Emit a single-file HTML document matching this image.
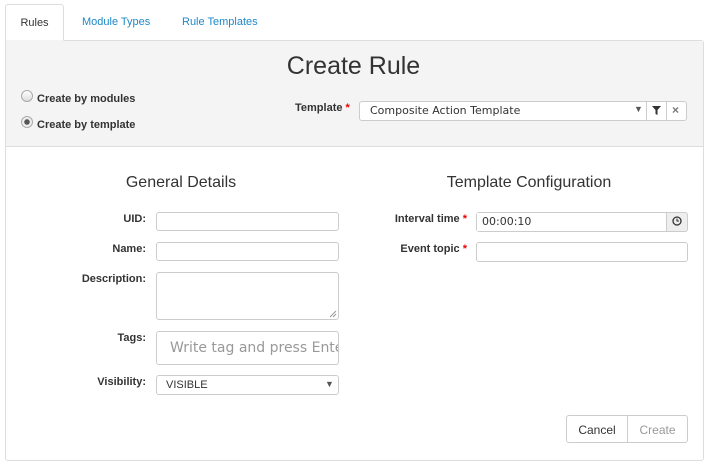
<!DOCTYPE html>
<html><head><meta charset="utf-8"><style>
*{box-sizing:border-box}
body{margin:0;width:707px;height:463px;background:#fff;font-family:"Liberation Sans",Arial,sans-serif;font-size:12px;color:#333;position:relative;overflow:hidden}
.a{position:absolute}
.tab{top:4px;height:37px;line-height:36px;font-size:11px}
.lbl{font-weight:bold;font-size:11px;text-align:right;color:#333}
.inp{border:1px solid #ccc;border-radius:3px;background:#fff}
.req{color:#e00}
</style></head><body>
<div class="a" style="left:5px;top:40px;width:699px;height:421px;border:1px solid #ddd;border-radius:0 3px 3px 3px"></div>
<div class="a tab" style="left:5px;width:59px;border:1px solid #ddd;border-bottom:1px solid #f4f4f4;border-radius:3px 3px 0 0;background:#fff;text-align:center;color:#333;z-index:2">Rules</div>
<div class="a tab" style="left:82px;color:#1e88c8">Module Types</div>
<div class="a tab" style="left:182px;color:#1e88c8">Rule Templates</div>
<div class="a" style="left:6px;top:41px;width:697px;height:106px;background:#f4f4f4;border-bottom:1px solid #ddd"></div>
<div class="a" style="left:0;width:707px;top:52px;text-align:center;font-size:25px;color:#333">Create Rule</div>
<div class="a" style="left:21px;top:90px;width:12px;height:12px;border-radius:50%;border:1px solid #aaa;background:linear-gradient(#fff,#ddd)"></div>
<div class="a" style="left:37px;top:93px;font-size:11px;font-weight:bold">Create by modules</div>
<div class="a" style="left:21px;top:116px;width:12px;height:12px;border-radius:50%;border:1px solid #aaa;background:radial-gradient(#555 0 2.5px,#eee 3px)"></div>
<div class="a" style="left:37px;top:119px;font-size:11px;font-weight:bold">Create by template</div>
<div class="a lbl" style="left:295px;top:102px">Template <span class="req">*</span></div>
<div class="a inp" style="left:359px;top:101px;width:328px;height:20px"></div>
<div class="a" style="left:370px;top:104px;font-family:'DejaVu Sans',sans-serif;font-size:11px">Composite Action Template</div>
<div class="a" style="left:634px;top:104px;font-size:9px;color:#555">▼</div>
<div class="a" style="left:646px;top:102px;width:21px;height:18px;border-left:1px solid #ccc;border-right:1px solid #ccc"></div>
<svg class="a" style="left:652px;top:106px" width="9" height="9"><path d="M0 0H9L5.5 4V9L3.5 8V4Z" fill="#333"/></svg>
<div class="a" style="left:672px;top:103px;font-size:12px;font-weight:bold;color:#777">×</div>
<div class="a" style="left:0;width:362px;top:174px;text-align:center;font-size:16px">General Details</div>
<div class="a" style="left:350px;width:358px;top:174px;text-align:center;font-size:16px">Template Configuration</div>
<div class="a lbl" style="left:40px;width:106px;top:213px">UID:</div>
<div class="a inp" style="left:156px;top:212px;width:183px;height:19px"></div>
<div class="a lbl" style="left:40px;width:106px;top:243px">Name:</div>
<div class="a inp" style="left:156px;top:242px;width:183px;height:19px"></div>
<div class="a lbl" style="left:40px;width:106px;top:273px">Description:</div>
<div class="a inp" style="left:156px;top:272px;width:183px;height:48px"></div>
<svg class="a" style="left:329px;top:310px" width="8" height="8"><path d="M7 1L1 7M7 4L4 7" stroke="#999" stroke-width="1"/></svg>
<div class="a lbl" style="left:40px;width:106px;top:332px">Tags:</div>
<div class="a inp" style="left:156px;top:331px;width:183px;height:34px;overflow:hidden;white-space:nowrap;padding:8px 0 0 13px;font-family:'DejaVu Sans',sans-serif;font-size:14px;color:#999">Write tag and press Enter</div>
<div class="a lbl" style="left:40px;width:106px;top:376px">Visibility:</div>
<div class="a inp" style="left:156px;top:375px;width:183px;height:20px;padding:3px 0 0 9px;font-size:11px">VISIBLE</div>
<div class="a" style="left:325px;top:379px;font-size:9px;color:#555">▼</div>
<div class="a lbl" style="left:360px;width:107px;top:213px">Interval time <span class="req">*</span></div>
<div class="a inp" style="left:476px;top:212px;width:212px;height:20px;background:#eee"></div>
<div class="a" style="left:477px;top:213px;width:190px;height:18px;background:#fff;border-right:1px solid #ccc;padding:2px 0 0 5px;font-family:'DejaVu Sans',sans-serif;font-size:11px">00:00:10</div>
<svg class="a" style="left:672px;top:216px" width="10" height="10"><circle cx="5" cy="5" r="4" fill="none" stroke="#333" stroke-width="1.3"/><path d="M5 2.5V5H7" fill="none" stroke="#333" stroke-width="1.1"/></svg>
<div class="a lbl" style="left:360px;width:107px;top:243px">Event topic <span class="req">*</span></div>
<div class="a inp" style="left:476px;top:242px;width:212px;height:20px"></div>
<div class="a inp" style="left:566px;top:415px;width:122px;height:28px"></div>
<div class="a" style="left:627px;top:416px;width:1px;height:26px;background:#ccc"></div>
<div class="a" style="left:566px;width:62px;top:423px;text-align:center;font-size:12px">Cancel</div>
<div class="a" style="left:627px;width:61px;top:423px;text-align:center;font-size:12px;color:#999">Create</div>
</body></html>
